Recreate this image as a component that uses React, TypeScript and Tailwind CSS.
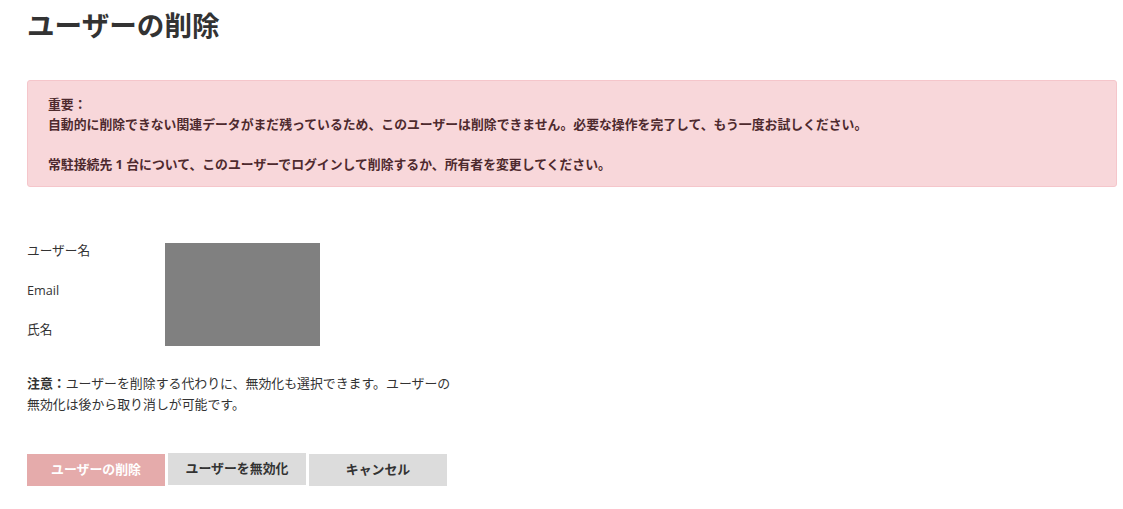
export default function App() {
  return (
    <div
      className="min-h-[509px] bg-white pl-[27px] pr-[6px] pt-[6px] text-[#333]"
      style={{ fontFamily: '"Open Sans", "Noto Sans CJK JP", sans-serif' }}
    >
      <h1 className="text-[27.6px] font-bold leading-[38px] text-[#333]">
        ユーザーの削除
      </h1>

      <div className="mt-[36px] rounded-[3px] border border-[#f5c6cb] bg-[#f8d7da] px-[20px] pt-[13px] pb-[12px] text-[12.85px] font-bold leading-[20px] text-[#4e2a2e]">
        <p>重要：</p>
        <p>
          自動的に削除できない関連データがまだ残っているため、このユーザーは削除できません。必要な操作を完了して、もう一度お試しください。
        </p>
        <p className="mt-[20px]">
          常駐接続先 1 台について、このユーザーでログインして削除するか、所有者を変更してください。
        </p>
      </div>

      <div className="mt-[56px] flex items-start">
        <div className="-mt-[3px] flex w-[138px] flex-col text-[12.7px] leading-[20px]">
          <div className="h-[39.5px]">ユーザー名</div>
          <div className="h-[39.5px]">Email</div>
          <div className="h-[20px]">氏名</div>
        </div>
        <div className="h-[103px] w-[155px] bg-[#808080]" />
      </div>

      <p className="mt-[27px] w-[450px] text-[12.9px] leading-[21px] text-[#333]">
        <span className="font-bold">注意：</span>
        ユーザーを削除する代わりに、無効化も選択できます。ユーザーの
        <br />
        無効化は後から取り消しが可能です。
      </p>

      <div className="mt-[38px] flex items-start gap-[3px]">
        <button className="mt-[1px] h-[32px] w-[138px] bg-[#e5abab] text-[12.9px] font-bold text-white">
          ユーザーの削除
        </button>
        <button className="h-[32px] w-[138px] bg-[#dcdcdc] text-[12.9px] font-bold text-[#333]">
          ユーザーを無効化
        </button>
        <button className="mt-[1px] h-[32px] w-[138px] bg-[#dcdcdc] text-[12.9px] font-bold text-[#333]">
          キャンセル
        </button>
      </div>
    </div>
  );
}
